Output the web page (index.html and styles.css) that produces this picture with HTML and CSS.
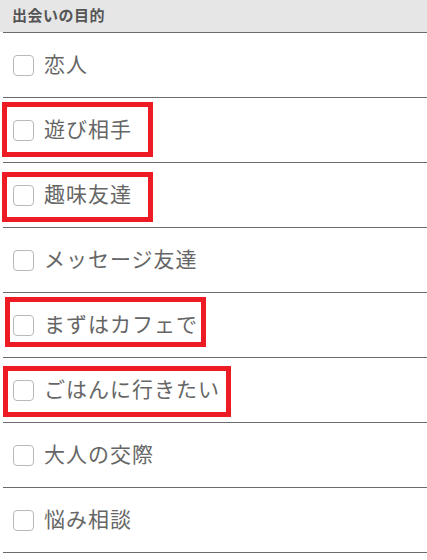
FILE: index.html
```html
<!DOCTYPE html>
<html lang="ja">
<head>
  <meta charset="UTF-8">
  <title>出会いの目的</title>
  <link rel="stylesheet" href="styles.css">
</head>
<body>
  <div class="section">
    <div class="section-title">出会いの目的</div>

    <ul class="purpose-list">
      <li><label><span class="check"></span><span class="text">恋人</span></label></li>
      <li><label><span class="check"></span><span class="text">遊び相手</span></label></li>
      <li><label><span class="check"></span><span class="text">趣味友達</span></label></li>
      <li><label><span class="check"></span><span class="text">メッセージ友達</span></label></li>
      <li><label><span class="check"></span><span class="text">まずはカフェで</span></label></li>
      <li><label><span class="check"></span><span class="text">ごはんに行きたい</span></label></li>
      <li><label><span class="check"></span><span class="text">大人の交際</span></label></li>
      <li><label><span class="check"></span><span class="text">悩み相談</span></label></li>
    </ul>

    <!-- red marks drawn over the list -->
    <div class="mark mark-1"></div>
    <div class="mark mark-2"></div>
    <div class="mark mark-3"></div>
    <div class="mark mark-4"></div>
  </div>
</body>
</html>
```

FILE: styles.css
```css
body {
  margin: 0;
  background: #fff;
  font-family: "Noto Sans CJK JP", "Noto Sans", sans-serif;
  color: #666;
}

.section {
  position: relative;
}

.section-title {
  height: 32px;
  line-height: 29px;
  padding-left: 12px;
  background-color: #e6e6e6;
  font-size: 15px;
  font-weight: bold;
  letter-spacing: 0.5px;
  color: #555;
}

.purpose-list {
  list-style: none;
  margin: 0 0 0 3px;
  padding: 0;
}

.purpose-list li {
  border-top: 1px solid #6b6b6b;
}

.purpose-list li:last-child {
  border-bottom: 1px solid #6b6b6b;
}

.purpose-list label {
  display: flex;
  align-items: center;
  gap: 10px;
  height: 64px;
  padding-left: 10px;
  font-size: 21px;
  letter-spacing: 1px;
  color: #666;
}

.purpose-list .text {
  margin-bottom: 5px;
}

.check {
  width: 19px;
  height: 19px;
  border: 1px solid #b9b9b9;
  border-radius: 4px;
  flex-shrink: 0;
}

.mark {
  position: absolute;
  border: 5px solid #ed1c24;
  box-sizing: border-box;
}

.mark-1 { left: 2px; top: 102px; width: 151px; height: 55px; }
.mark-2 { left: 2px; top: 172px; width: 151px; height: 50px; }
.mark-3 { left: 5px; top: 297px; width: 201px; height: 50px; }
.mark-4 { left: 3px; top: 366px; width: 228px; height: 51px; }
```
